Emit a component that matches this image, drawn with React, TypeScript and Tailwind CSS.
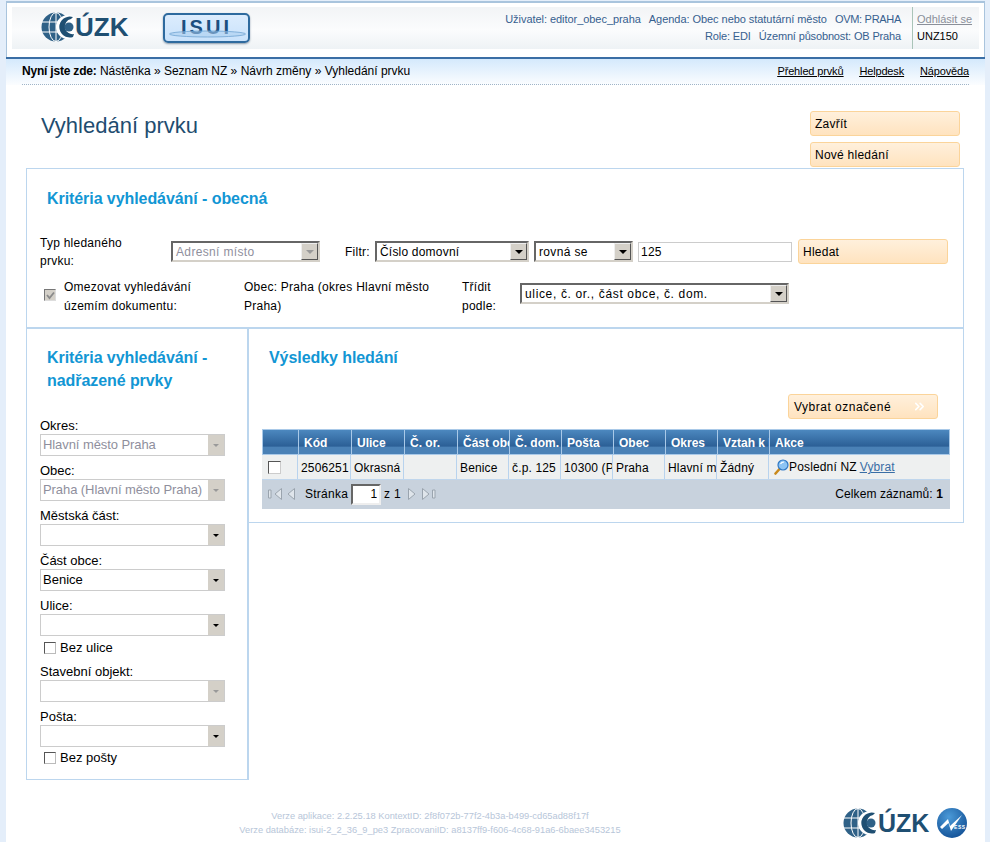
import { ChevronsRight } from 'lucide-react';

const columns = [
  { title: '', value: '', width: 'w-[36px]' },
  { title: 'Kód', value: '2506251', width: 'w-[53px]' },
  { title: 'Ulice', value: 'Okrasná', width: 'w-[53px]' },
  { title: 'Č. or.', value: '', width: 'w-[53px]' },
  { title: 'Část obce', value: 'Benice', width: 'w-[52px]' },
  { title: 'Č. dom.', value: 'č.p. 125', width: 'w-[52px]' },
  { title: 'Pošta', value: '10300 (Praha)', width: 'w-[52px]' },
  { title: 'Obec', value: 'Praha', width: 'w-[52px]' },
  { title: 'Okres', value: 'Hlavní město', width: 'w-[52px]' },
  { title: 'Vztah k NZ', value: 'Žádný', width: 'w-[52px]' },
];

const Logo = ({ small }: { small?: boolean }) => (
  <div className={small ? 'flex items-center h-[30px] w-[86px]' : 'flex items-center h-[30px] w-[88px]'}>
    <svg width="34" height="30" viewBox="0 0 34 30" className="shrink-0">
      <circle cx="15" cy="15" r="14.5" fill="#2f6187" />
      <g stroke="#fff" strokeWidth="1" fill="none">
        <ellipse cx="15" cy="15" rx="7" ry="14.5" />
        <path d="M1 10 H29 M1 20 H29 M15 0 V30" />
      </g>
      <circle cx="27" cy="15" r="12" fill="#fff" />
      <path d="M32 5 A10.5 10.5 0 1 0 32 25 L33 22 A7.5 7.5 0 0 1 30 7 Z" fill="#1f4f72" />
      <circle cx="28" cy="15" r="4.5" fill="#2f6187" />
    </svg>
    <span
      className={
        small
          ? 'ml-[1px] font-bold text-[25px] leading-none text-[#1f4f72]'
          : 'font-bold text-[26px] leading-none text-[#1f4f72]'
      }
    >
      ÚZK
    </span>
  </div>
);

const IsuiBadge = () => (
  <div className="relative w-[87px] h-[30px] rounded-[5px] border-2 border-[#2e6a9e] bg-[linear-gradient(#dcecfd,#c9e2fb)] shadow-[0_1px_2px_#8a9aaa] flex items-center justify-center overflow-hidden">
    <span className="font-bold text-[20px] leading-none tracking-[3px] text-[#1c4f80] -mt-[3px]">ISUI</span>
    <svg width="79" height="8" viewBox="0 0 79 8" className="absolute left-[3px] top-[15px]">
      <ellipse cx="39.5" cy="4" rx="38" ry="3" fill="#a9cdee" fillOpacity="0.55" stroke="#6fa3d2" strokeWidth="0.8" />
    </svg>
  </div>
);

const NessBall = () => (
  <svg width="30" height="30" viewBox="0 0 30 30">
    <defs>
      <radialGradient id="ness" cx="0.4" cy="0.3" r="0.8">
        <stop offset="0" stopColor="#4b9ad8" />
        <stop offset="1" stopColor="#0f4c92" />
      </radialGradient>
    </defs>
    <circle cx="15" cy="15" r="15" fill="url(#ness)" />
    <path d="M3 19 L11 11 L13 18 L25 7 L14 23 L11.5 15 L5 21 Z" fill="#fff" />
    <text x="17" y="21" fontSize="5" fontWeight="bold" fill="#fff" letterSpacing="0.6">ESS</text>
  </svg>
);

const OrangeButton = ({ label, className }: { label: string; className: string }) => (
  <button
    className={`${className} flex items-center pl-[4px] rounded-[3px] border border-[#fbd49a] bg-[linear-gradient(#fff0dc,#ffe3bf)] text-[12px] tracking-[0.25px] text-black text-left`}
  >
    {label}
  </button>
);

// Windows classic combo, used in the top panel
const ClassicSelect = ({
  value,
  width,
  disabled,
  spacing = 'tracking-[0.35px]',
}: {
  value: string;
  width: string;
  disabled?: boolean;
  spacing?: string;
}) => (
  <div
    className={`${width} h-[21px] flex items-center justify-between bg-white border-2 border-t-[#666] border-l-[#666] border-r-[#d4d0c8] border-b-[#d4d0c8]`}
  >
    <span className={disabled ? `pl-[3px] text-[#8f8f9d] ${spacing}` : `pl-[3px] text-black ${spacing}`}>{value}</span>
    <span className="w-[17px] h-[17px] flex items-center justify-center bg-[#d4d0c8] border border-t-[#eee] border-l-[#eee] border-r-[#555] border-b-[#555]">
      <span
        className={
          disabled
            ? 'w-0 h-0 border-x-[4px] border-x-transparent border-t-[4px] border-t-[#999]'
            : 'w-0 h-0 border-x-[4px] border-x-transparent border-t-[4px] border-t-black'
        }
      />
    </span>
  </div>
);

// flat combo of the left column
const SideField = ({ label, value, disabled }: { label: string; value?: string; disabled?: boolean }) => (
  <div>
    <div className="h-[16px] leading-[16px] text-[13px] text-black">{label}</div>
    <div className="w-[185px] h-[22px] flex items-center justify-between bg-white border border-[#ccc]">
      <span
        className={
          disabled
            ? 'pl-[2px] text-[13px] tracking-[-0.08px] text-[#8f8f9d] whitespace-nowrap'
            : 'pl-[2px] text-[13px] text-black'
        }
      >
        {value}
      </span>
      <span className="w-[16px] h-[20px] flex items-center justify-center bg-[#d4d0c8]">
        <span
          className={
            disabled
              ? 'w-0 h-0 border-x-[3px] border-x-transparent border-t-[3px] border-t-[#999]'
              : 'w-0 h-0 border-x-[3px] border-x-transparent border-t-[3px] border-t-black'
          }
        />
      </span>
    </div>
  </div>
);

const SideCheck = ({ label, className }: { label: string; className: string }) => (
  <div className={`${className} flex items-center pl-[4px] gap-[4px] h-[14px]`}>
    <span className="w-[12px] h-[12px] bg-white border border-t-[#555] border-l-[#555] border-r-[#bbb] border-b-[#bbb]" />
    <span className="text-[13px] text-black">{label}</span>
  </div>
);

const PagerIcon = ({ d, width }: { d: string; width: number }) => (
  <svg width={width} height="12" viewBox={`0 0 ${width} 12`} fill="#dfe5eb" stroke="#9aa4ae" strokeWidth="1" className="shrink-0">
    <path d={d} />
  </svg>
);

const SearchIcon = () => (
  <svg width="15" height="16" viewBox="0 0 15 16" className="shrink-0">
    <path d="M1.5 14.5 L5.5 10" stroke="#c98a1c" strokeWidth="2.6" strokeLinecap="round" />
    <circle cx="9" cy="6" r="5" fill="#8cc4f4" stroke="#2f78c4" strokeWidth="1.2" />
    <path d="M6.5 5 Q7.5 3 10 3" stroke="#fff" strokeWidth="1.2" fill="none" />
  </svg>
);

const ResultsTable = () => (
  <div className="w-[688px] text-[12px]">
    <div className="flex h-[26px] border border-[#a9c9e8] bg-[linear-gradient(#4c88bf_0%,#2b5f96_68%,#4a81b6_70%,#4a81b6_100%)]">
      {columns.map((col, i) => (
        <div
          key={i}
          className={`${col.width} shrink-0 border-r border-[#a9c9e8] pl-[5px] leading-[26px] font-bold text-white whitespace-nowrap overflow-hidden`}
        >
          {col.title}
        </div>
      ))}
      <div className="pl-[5px] leading-[26px] font-bold text-white">Akce</div>
    </div>
    <div className="flex h-[25px] bg-[#eef0f0] border-b border-[#c0d6ec] tracking-[0.15px]">
      {columns.map((col, i) => (
        <div
          key={i}
          className={`${col.width} shrink-0 border-r border-[#b8d3ee] pl-[3px] leading-[27px] whitespace-nowrap overflow-hidden text-black`}
        >
          {i === 0 ? (
            <div className="h-full flex items-center pl-[3px]">
              <span className="w-[13px] h-[13px] bg-white border border-t-[#555] border-l-[#555] border-r-[#ccc] border-b-[#ccc]" />
            </div>
          ) : (
            col.value
          )}
        </div>
      ))}
      <div className="flex items-center pl-[5px] text-black">
        <SearchIcon />
        <span>Poslední NZ</span>
        <a className="ml-[3px] underline text-[#3a6ea5]">Vybrat</a>
      </div>
    </div>
    <div className="h-[29px] bg-[#c8d2dd] flex items-start justify-between">
      <div className="flex items-center h-[28px] pl-[6px] text-black">
        <PagerIcon width={14} d="M0.5 2 H3 V10 H0.5 Z M13.5 0.5 L7 6 L13.5 11.5 Z" />
        <span className="w-[5px]" />
        <PagerIcon width={8} d="M7.5 0.5 L1 6 L7.5 11.5 Z" />
        <span className="ml-[10px] tracking-[0.25px]">Stránka</span>
        <input
          readOnly
          value="1"
          className="ml-[3px] w-[30px] h-[21px] pr-[2px] text-right bg-white border-2 border-t-[#666] border-l-[#666] border-r-[#eee] border-b-[#eee] outline-none"
        />
        <span className="ml-[3px] tracking-[0.25px]">z 1</span>
        <span className="w-[7px]" />
        <PagerIcon width={8} d="M0.5 0.5 L7 6 L0.5 11.5 Z" />
        <span className="w-[6px]" />
        <PagerIcon width={14} d="M0.5 0.5 L7 6 L0.5 11.5 Z M10.5 2 H13 V10 H10.5 Z" />
      </div>
      <div className="pr-[7px] pt-[5px] text-black tracking-[0.1px]">
        Celkem záznamů: <b>1</b>
      </div>
    </div>
  </div>
);

export default function App() {
  return (
    <div className="w-[990px] h-[842px] overflow-hidden bg-[#e4eefa] pl-[6px] pr-[5px] pt-[1px] font-['Liberation_Sans',Arial,sans-serif] text-[12px] leading-[18px]">
      <div className="h-[841px] bg-white">
        {/* header */}
        <header className="h-[56px] border-t-2 border-x border-[#a9c4dd] bg-white px-[5px] pt-[4px]">
          <div className="h-[42px] flex bg-[linear-gradient(#f2f4f6,#fbfcfd_55%,#eef2f5)]">
            <div className="flex items-center pl-[29px] pb-[2px] flex-1">
              <Logo />
              <div className="ml-[34px] mt-[2px]">
                <IsuiBadge />
              </div>
            </div>
            <div className="text-[11px] text-[#36608f] text-right pt-[4px] leading-[17px] whitespace-nowrap">
              <div className="flex justify-end gap-[8px] tracking-[-0.05px]">
                <span>Uživatel: editor_obec_praha</span>
                <span>Agenda: Obec nebo statutární město</span>
                <span className="tracking-[-0.3px]">OVM: PRAHA</span>
              </div>
              <div className="flex justify-end gap-[8px] tracking-[-0.15px]">
                <span>Role: EDI</span>
                <span>Územní působnost: OB Praha</span>
              </div>
            </div>
            <div className="ml-[11px] w-[67px] border-l border-[#a9c4b8] pl-[4px] pt-[4px] text-[11px] leading-[17px] whitespace-nowrap">
              <a className="underline text-[#8a8f99] block">Odhlásit se</a>
              <span className="text-black">UNZ150</span>
            </div>
          </div>
        </header>
        <div className="h-[2px] bg-[#3a6ea5]" />

        {/* breadcrumb */}
        <div className="h-[26px] px-[16px] bg-[linear-gradient(#d4e9fc,#fbfdff)]">
          <div className="h-[26px] flex items-center justify-between border-b border-dotted border-[#9fb4c7] pb-[1px]">
            <div className="text-black">
              <b className="tracking-[-0.2px]">Nyní jste zde:</b> Nástěnka » Seznam NZ » Návrh změny » Vyhledání prvku
            </div>
            <div className="flex gap-[16px] text-[11px] text-black underline tracking-[-0.15px]">
              <a>Přehled prvků</a>
              <a>Helpdesk</a>
              <a>Nápověda</a>
            </div>
          </div>
        </div>

        {/* title + actions */}
        <div className="h-[83px] pl-[20px] pr-[25px] flex justify-between items-start">
          <h1 className="mt-[28px] ml-[15px] text-[22px] leading-[26px] text-[#1f4d70] font-normal">Vyhledání prvku</h1>
          <div className="mt-[26px] flex flex-col gap-[6px]">
            <OrangeButton label="Zavřít" className="w-[150px] h-[25px]" />
            <OrangeButton label="Nové hledání" className="w-[150px] h-[25px]" />
          </div>
        </div>

        <div className="mx-[20px] w-[938px]">
          {/* general criteria */}
          <section className="h-[161px] border border-b-2 border-[#bcd6ee] pl-[13px] pt-[19px] tracking-[0.25px]">
            <h2 className="ml-[7px] h-[21px] text-[16px] leading-[21px] font-bold text-[#1296d4] tracking-[-0.07px]">
              Kritéria vyhledávání - obecná
            </h2>
            <div className="mt-[25px] flex items-start h-[44px]">
              <div className="w-[131px] leading-[18px]">
                Typ hledaného
                <br />
                prvku:
              </div>
              <div className="mt-[5px] flex items-center">
                <ClassicSelect value="Adresní místo" width="w-[149px]" disabled />
                <span className="ml-[25px] mr-[4px] w-[26px] whitespace-nowrap">Filtr:</span>
                <ClassicSelect value="Číslo domovní" width="w-[154px]" spacing="tracking-[0.2px]" />
                <div className="w-[5px]" />
                <ClassicSelect value="rovná se" width="w-[99px]" />
                <input
                  readOnly
                  value="125"
                  className="ml-[5px] w-[154px] h-[20px] pl-[2px] border border-[#ccc] bg-white text-black outline-none"
                />
                <OrangeButton label="Hledat" className="ml-[6px] w-[150px] h-[25px]" />
              </div>
            </div>
            <div className="flex items-start">
              <span className="mt-[11px] ml-[4px] w-[12px] h-[12px] flex items-center justify-center bg-[#d4d0c8] border border-t-[#777] border-l-[#777] border-r-[#ddd] border-b-[#ddd]">
                <svg width="9" height="9" viewBox="0 0 9 9" fill="none" stroke="#8a8a8a" strokeWidth="1.8">
                  <path d="M1 4 L3.5 7 L8 1.5" />
                </svg>
              </span>
              <div className="ml-[8px] w-[180px] leading-[19px]">
                Omezovat vyhledávání
                <br />
                územím dokumentu:
              </div>
              <div className="w-[218px] leading-[19px]">
                Obec: Praha (okres Hlavní město
                <br />
                Praha)
              </div>
              <div className="w-[58px] leading-[19px]">
                Třídit
                <br />
                podle:
              </div>
              <div className="mt-[5px]">
                <ClassicSelect value="ulice, č. or., část obce, č. dom." width="w-[269px]" spacing="tracking-[0.65px]" />
              </div>
            </div>
          </section>

          <div className="flex items-start">
            {/* parent elements */}
            <aside className="w-[223px] h-[451px] border border-t-0 border-r-2 border-[#bcd6ee] pl-[13px] pt-[17px]">
              <h2 className="ml-[7px] text-[16px] leading-[23px] font-bold text-[#1296d4] tracking-[-0.07px]">
                Kritéria vyhledávání -
                <br />
                nadřazené prvky
              </h2>
              <div className="mt-[26px] flex flex-col gap-[7px]">
                <SideField label="Okres:" value="Hlavní město Praha" disabled />
                <SideField label="Obec:" value="Praha (Hlavní město Praha)" disabled />
                <SideField label="Městská část:" />
                <SideField label="Část obce:" value="Benice" />
                <SideField label="Ulice:" />
              </div>
              <SideCheck label="Bez ulice" className="mt-[5px]" />
              <div className="mt-[9px] flex flex-col gap-[7px]">
                <SideField label="Stavební objekt:" disabled />
                <SideField label="Pošta:" />
              </div>
              <SideCheck label="Bez pošty" className="mt-[4px]" />
            </aside>

            {/* results */}
            <section className="w-[715px] h-[194px] border-r border-b border-[#bcd6ee] pl-[13px] pt-[17px]">
              <h2 className="ml-[7px] text-[16px] leading-[23px] font-bold text-[#1296d4] tracking-[-0.07px]">Výsledky hledání</h2>
              <div className="mt-[25px] mr-[25px] flex justify-end">
                <button className="w-[150px] h-[25px] flex items-center justify-between pl-[5px] pr-[10px] rounded-[3px] border border-[#fbd49a] bg-[linear-gradient(#fff0dc,#ffe3bf)] text-[12px] tracking-[0.5px] text-black">
                  Vybrat označené
                  <ChevronsRight size={15} color="#ffffff" strokeWidth={2.5} />
                </button>
              </div>
              <div className="mt-[10px]">
                <ResultsTable />
              </div>
            </section>
          </div>

          {/* footer */}
          <footer className="mt-[29px] flex items-start">
            <div className="w-[808px] shrink-0 text-center text-[9.3px] leading-[14px] text-[#b7c6d9]">
              <div>Verze aplikace: 2.2.25.18 KontextID: 2f8f072b-77f2-4b3a-b499-cd65ad88f17f</div>
              <div>Verze databáze: isui-2_2_36_9_pe3 ZpracovaniID: a8137ff9-f606-4c68-91a6-6baee3453215</div>
            </div>
            <div className="ml-[9px] shrink-0 flex items-center gap-[8px] -mt-[1px]">
              <Logo small />
              <NessBall />
            </div>
          </footer>
        </div>
      </div>
    </div>
  );
}
